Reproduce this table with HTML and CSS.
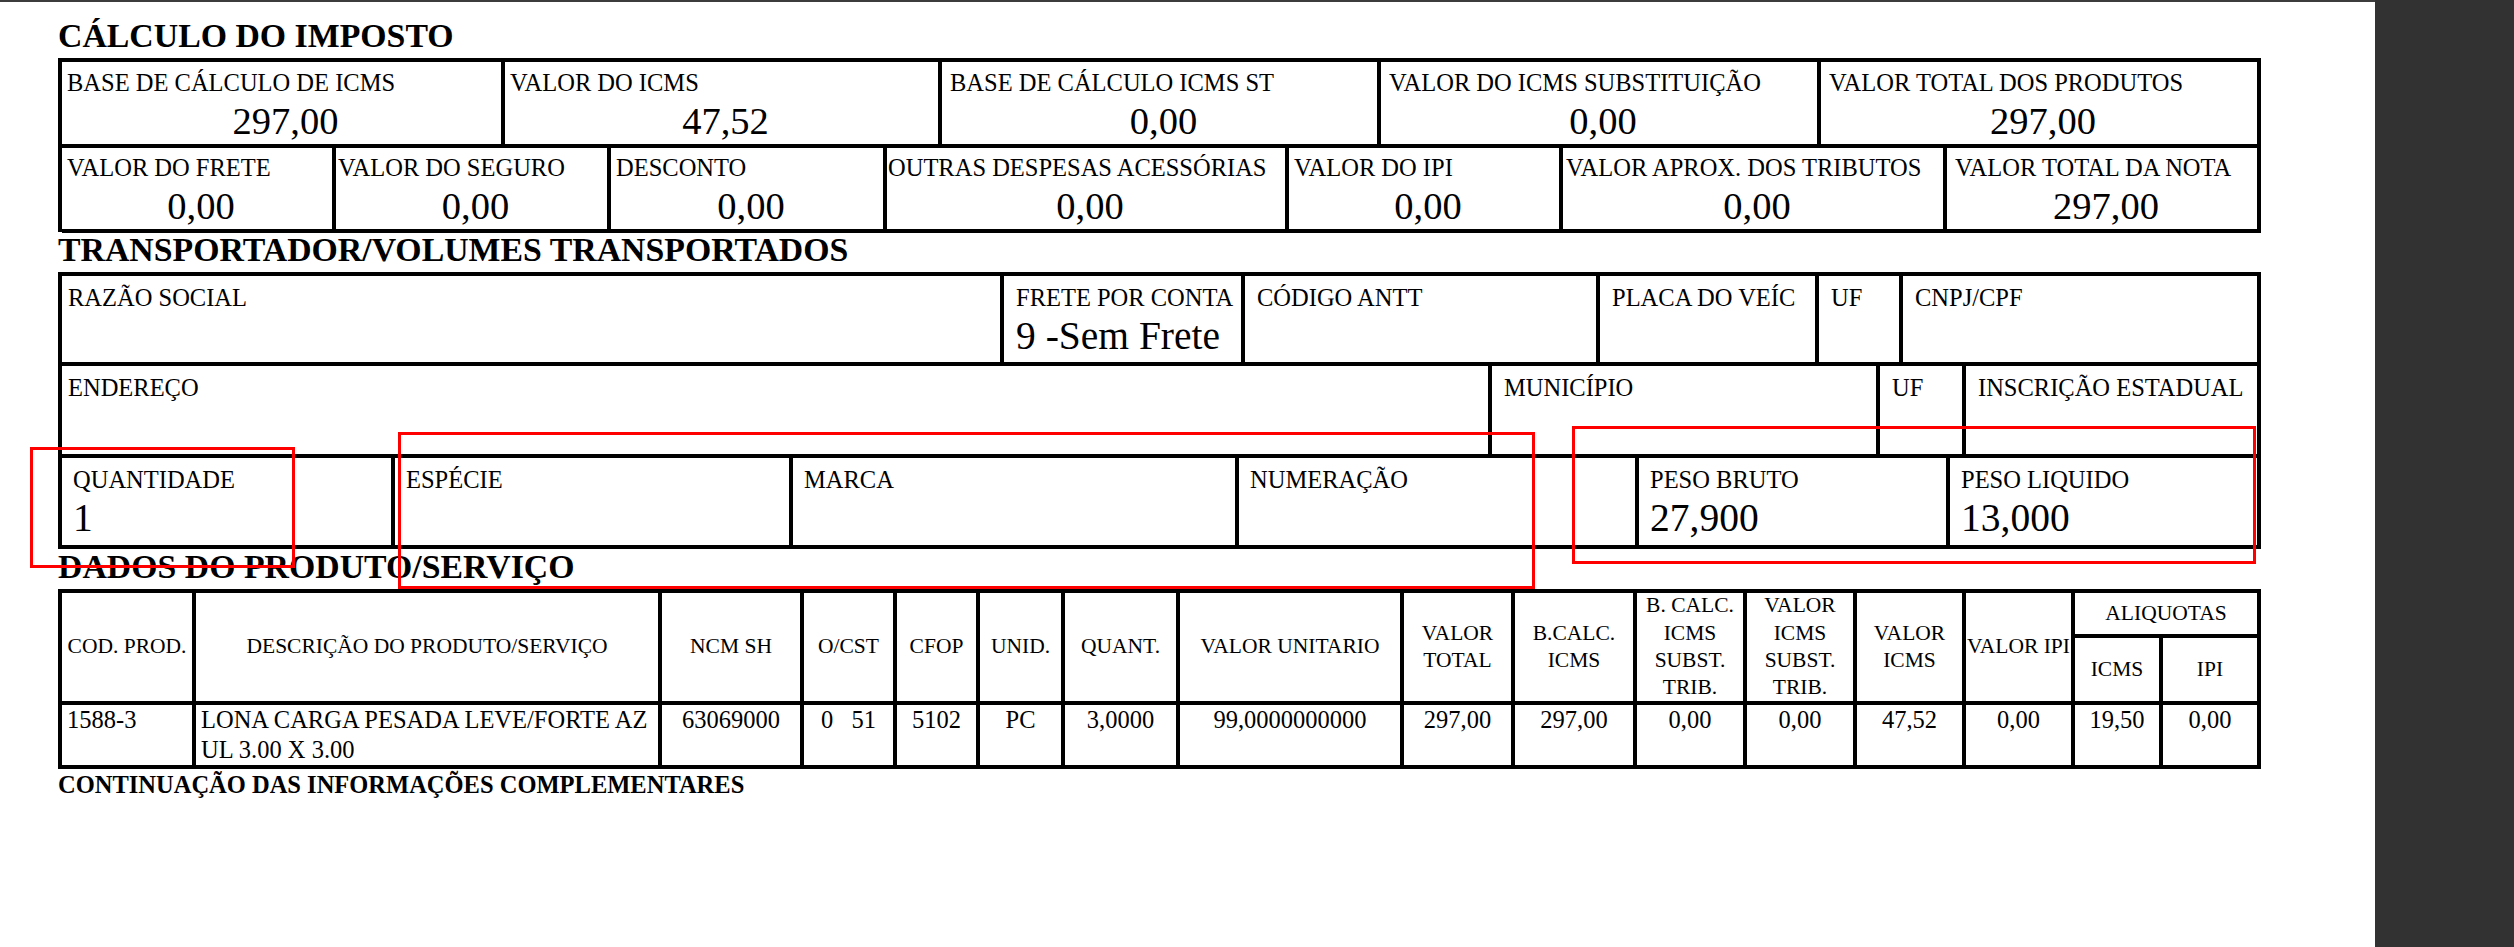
FILE: index.html
```html
<!DOCTYPE html>
<html lang="pt-BR">
<head>
<meta charset="utf-8">
<title>DANFE - Cálculo do imposto</title>
<link rel="stylesheet" href="styles.css">
</head>
<body>
<div class="viewer">
  <main class="page">
    <h2 class="sec sec-first">CÁLCULO DO IMPOSTO</h2>
    <section class="box">
      <div class="row imp-r1">
        <div class="cell"><div class="lbl">BASE DE CÁLCULO DE ICMS</div><div class="val">297,00</div></div>
        <div class="cell"><div class="lbl">VALOR DO ICMS</div><div class="val">47,52</div></div>
        <div class="cell"><div class="lbl pad8">BASE DE CÁLCULO ICMS ST</div><div class="val">0,00</div></div>
        <div class="cell"><div class="lbl pad8">VALOR DO ICMS SUBSTITUIÇÃO</div><div class="val">0,00</div></div>
        <div class="cell"><div class="lbl pad8">VALOR TOTAL DOS PRODUTOS</div><div class="val">297,00</div></div>
      </div>
      <div class="row imp-r2">
        <div class="cell"><div class="lbl">VALOR DO FRETE</div><div class="val">0,00</div></div>
        <div class="cell"><div class="lbl pad2">VALOR DO SEGURO</div><div class="val">0,00</div></div>
        <div class="cell"><div class="lbl">DESCONTO</div><div class="val">0,00</div></div>
        <div class="cell"><div class="lbl pad1">OUTRAS DESPESAS ACESSÓRIAS</div><div class="val">0,00</div></div>
        <div class="cell"><div class="lbl">VALOR DO IPI</div><div class="val">0,00</div></div>
        <div class="cell"><div class="lbl pad3">VALOR APROX. DOS TRIBUTOS</div><div class="val">0,00</div></div>
        <div class="cell"><div class="lbl pad8">VALOR TOTAL DA NOTA</div><div class="val">297,00</div></div>
      </div>
    </section>

    <h2 class="sec">TRANSPORTADOR/VOLUMES TRANSPORTADOS</h2>
    <section class="box box-tr">
      <div class="row tr-r1">
        <div class="cell"><div class="lbl pad6">RAZÃO SOCIAL</div></div>
        <div class="cell"><div class="lbl">FRETE POR CONTA</div><div class="val">9 -Sem Frete</div></div>
        <div class="cell"><div class="lbl">CÓDIGO ANTT</div></div>
        <div class="cell"><div class="lbl">PLACA DO VEÍC</div></div>
        <div class="cell"><div class="lbl">UF</div></div>
        <div class="cell"><div class="lbl">CNPJ/CPF</div></div>
      </div>
      <div class="row tr-r2">
        <div class="cell"><div class="lbl pad6">ENDEREÇO</div></div>
        <div class="cell"><div class="lbl">MUNICÍPIO</div></div>
        <div class="cell"><div class="lbl">UF</div></div>
        <div class="cell"><div class="lbl">INSCRIÇÃO ESTADUAL</div></div>
      </div>
      <div class="row tr-r3">
        <div class="cell"><div class="lbl">QUANTIDADE</div><div class="val">1</div></div>
        <div class="cell"><div class="lbl">ESPÉCIE</div></div>
        <div class="cell"><div class="lbl">MARCA</div></div>
        <div class="cell"><div class="lbl">NUMERAÇÃO</div></div>
        <div class="cell"><div class="lbl">PESO BRUTO</div><div class="val">27,900</div></div>
        <div class="cell"><div class="lbl">PESO LIQUIDO</div><div class="val">13,000</div></div>
      </div>
    </section>

    <h2 class="sec">DADOS DO PRODUTO/SERVIÇO</h2>
    <section class="prod">
      <div class="th tall">COD. PROD.</div>
      <div class="th tall">DESCRIÇÃO DO PRODUTO/SERVIÇO</div>
      <div class="th tall">NCM SH</div>
      <div class="th tall">O/CST</div>
      <div class="th tall">CFOP</div>
      <div class="th tall">UNID.</div>
      <div class="th tall">QUANT.</div>
      <div class="th tall">VALOR UNITARIO</div>
      <div class="th tall">VALOR TOTAL</div>
      <div class="th tall">B.CALC. ICMS</div>
      <div class="th tall">B. CALC. ICMS SUBST. TRIB.</div>
      <div class="th tall">VALOR ICMS SUBST. TRIB.</div>
      <div class="th tall">VALOR ICMS</div>
      <div class="th tall nowrap">VALOR IPI</div>
      <div class="th wide">ALIQUOTAS</div>
      <div class="th">ICMS</div>
      <div class="th">IPI</div>

      <div class="td left">1588-3</div>
      <div class="td left">LONA CARGA PESADA LEVE/FORTE AZ<br>UL 3.00 X 3.00</div>
      <div class="td">63069000</div>
      <div class="td">0&nbsp;&nbsp;&nbsp;51</div>
      <div class="td">5102</div>
      <div class="td">PC</div>
      <div class="td">3,0000</div>
      <div class="td">99,0000000000</div>
      <div class="td">297,00</div>
      <div class="td">297,00</div>
      <div class="td">0,00</div>
      <div class="td">0,00</div>
      <div class="td">47,52</div>
      <div class="td">0,00</div>
      <div class="td">19,50</div>
      <div class="td">0,00</div>
    </section>

    <p class="cont">CONTINUAÇÃO DAS INFORMAÇÕES COMPLEMENTARES</p>

    <div class="mark mark-qty"></div>
    <div class="mark mark-esp"></div>
    <div class="mark mark-peso"></div>
  </main>
  <aside class="sidebar"></aside>
</div>
</body>
</html>
```

FILE: styles.css
```css
* { box-sizing: border-box; }

html, body {
  margin: 0;
  padding: 0;
}

body {
  background: #323232;
  font-family: "Liberation Serif", "Times New Roman", serif;
  color: #000;
}

.viewer {
  display: flex;
  height: 947px;
  overflow: hidden;
}

.page {
  position: relative;
  width: 2375px;
  flex: none;
  background: #fff;
  border-top: 2px solid #3c3c3c;
  padding: 17px 0 0 58px;
}

.sidebar {
  flex: 1;
  background: #323232;
}

.sec {
  margin: 1px 0 5px;
  font-size: 33.8px;
  line-height: 34px;
  font-weight: bold;
  white-space: nowrap;
}

.sec-first { margin-top: 0; }

/* bordered boxes */
.box {
  width: 2203px;
  border-left: 4px solid #000;
  border-top: 4px solid #000;
}

.row {
  display: grid;
}

.cell {
  border-right: 4px solid #000;
  border-bottom: 4px solid #000;
  padding-top: 7px;
  min-width: 0;
}

.lbl {
  font-size: 24.5px;
  line-height: 28px;
  padding-left: 5px;
  white-space: nowrap;
}

.lbl.pad1 { padding-left: 1px; }
.lbl.pad2 { padding-left: 2px; }
.lbl.pad3 { padding-left: 3px; }
.lbl.pad6 { padding-left: 6px; }
.lbl.pad8 { padding-left: 8px; }

.val {
  font-size: 38.5px;
  line-height: 46px;
  margin-top: 1px;
  text-align: center;
  padding-left: 8px;
  white-space: nowrap;
}

.imp-r1 { grid-template-columns: 443px 437px 439px 440px 440px; height: 85px; }
.imp-r2 { grid-template-columns: 274px 275px 276px 402px 274px 384px 314px; height: 85px; }

/* transportador */
.box-tr .cell { padding-top: 8px; }
.box-tr .lbl { padding-left: 12px; }
.box-tr .lbl.pad6 { padding-left: 6px; }
.box-tr .val {
  font-size: 39.5px;
  text-align: left;
  padding-left: 12px;
}
.tr-r3 .lbl, .tr-r3 .val { padding-left: 11px; }

.tr-r1 { grid-template-columns: 942px 241px 355px 219px 84px 358px; height: 90px; }
.tr-r2 { grid-template-columns: 1430px 388px 86px 295px; height: 92px; }
.tr-r3 { grid-template-columns: 333px 398px 446px 400px 311px 311px; height: 91px; }

/* produtos */
.prod {
  width: 2203px;
  display: grid;
  grid-template-columns: 134px 466px 142px 93px 83px 85px 115px 224px 111px 122px 110px 110px 109px 109px 88px 98px;
  grid-template-rows: 45px 67px 64px;
  border-left: 4px solid #000;
  border-top: 4px solid #000;
}

.th, .td {
  border-right: 4px solid #000;
  border-bottom: 4px solid #000;
  min-width: 0;
}

.th {
  display: flex;
  align-items: center;
  justify-content: center;
  text-align: center;
  font-size: 21.5px;
  line-height: 27.3px;
  padding: 0 1px;
}

.th.tall { grid-row: span 2; }
.th.wide { grid-column: span 2; }
.th.nowrap { white-space: nowrap; padding: 0; }

.td {
  font-size: 24.5px;
  line-height: 30px;
  text-align: center;
  padding: 0 2px;
  white-space: nowrap;
}

.td.left {
  text-align: left;
  padding: 0 5px;
}

.cont {
  margin: 2px 0 0;
  font-size: 24.5px;
  line-height: 28px;
  font-weight: bold;
  white-space: nowrap;
}

/* red annotation rectangles */
.mark {
  position: absolute;
  border: 3px solid #f00;
}

.mark-qty { left: 30px; top: 445px; width: 265px; height: 121px; }
.mark-esp { left: 398px; top: 430px; width: 1137px; height: 157px; }
.mark-peso { left: 1572px; top: 424px; width: 684px; height: 138px; }
```
